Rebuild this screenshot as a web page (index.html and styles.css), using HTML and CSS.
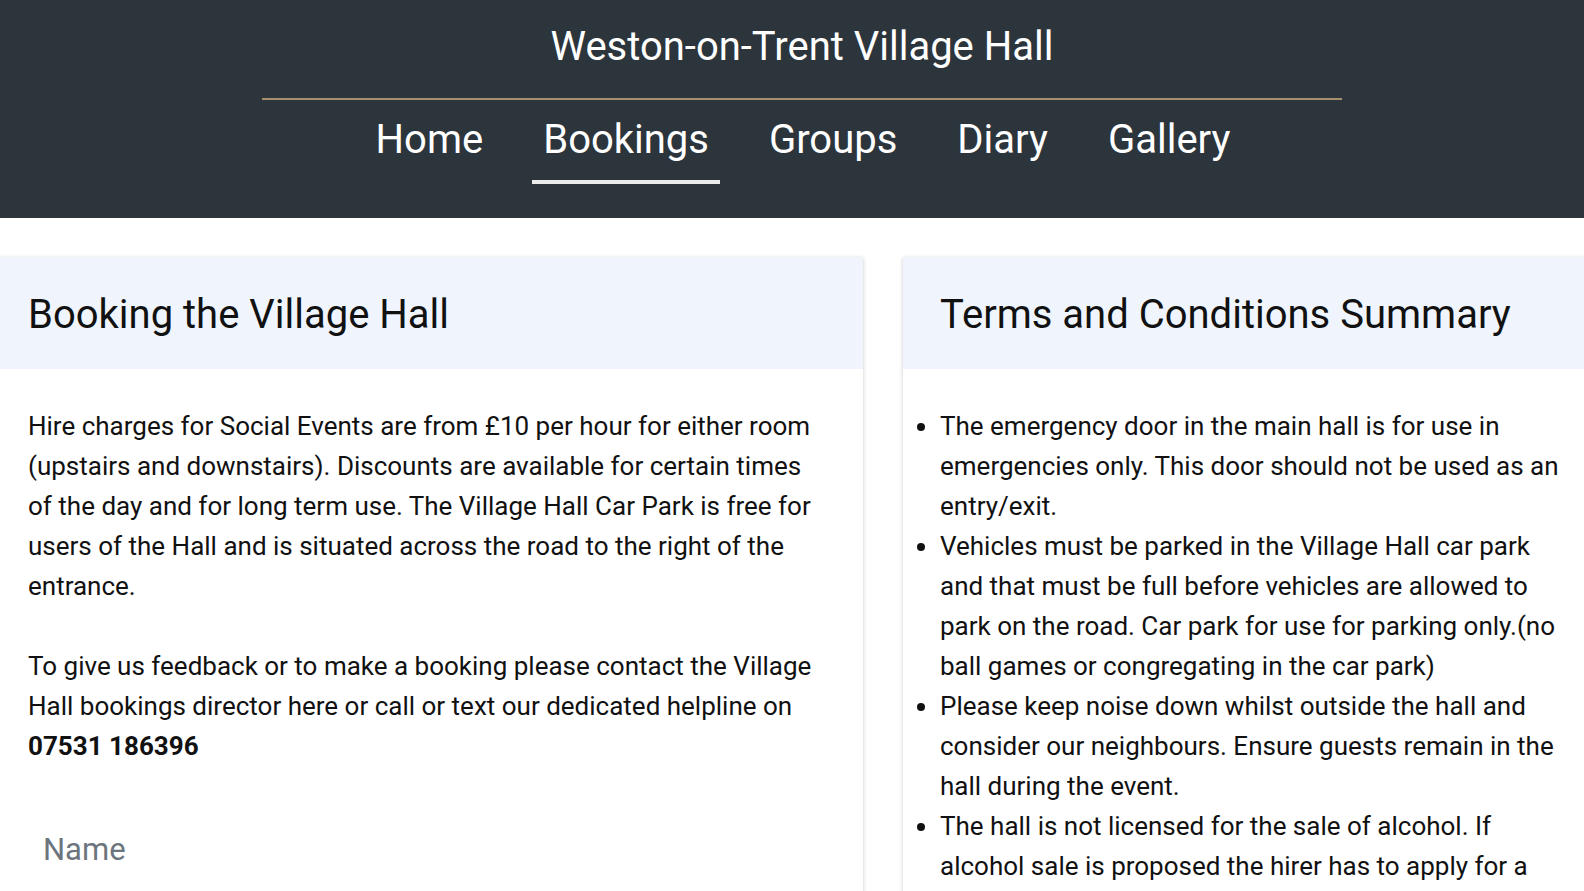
FILE: index.html
```html
<!DOCTYPE html>
<html lang="en">
<head>
<meta charset="utf-8">
<title>Bookings - Weston-on-Trent Village Hall</title>
<link rel="stylesheet" href="styles.css">
</head>
<body>
<header class="site-header">
  <h1 class="site-title">Weston-on-Trent Village Hall</h1>
  <hr class="header-rule">
  <nav class="main-nav">
    <a class="nav-link" href="#">Home</a>
    <a class="nav-link active" href="#">Bookings</a>
    <a class="nav-link" href="#">Groups</a>
    <a class="nav-link" href="#">Diary</a>
    <a class="nav-link" href="#">Gallery</a>
  </nav>
</header>
<main class="content">
  <section class="card card-booking">
    <div class="card-head"><h2 class="card-title">Booking the Village Hall</h2></div>
    <div class="card-body">
      <p class="para">Hire charges for Social Events are from £10 per hour for either room (upstairs and downstairs). Discounts are available for certain times of the day and for long term use. The Village Hall Car Park is free for users of the Hall and is situated across the road to the right of the entrance.</p>
      <p class="para">To give us feedback or to make a booking please contact the Village Hall bookings director here or call or text our dedicated helpline on <strong class="phone">07531 186396</strong></p>
      <form class="booking-form">
        <input class="field" type="text" placeholder="Name">
      </form>
    </div>
  </section>
  <section class="card card-terms">
    <div class="card-head"><h2 class="card-title">Terms and Conditions Summary</h2></div>
    <div class="card-body">
      <ul class="terms">
        <li>The emergency door in the main hall is for use in emergencies only. This door should not be used as an entry/exit.</li>
        <li>Vehicles must be parked in the Village Hall car park and that must be full before vehicles are allowed to park on the road. Car park for use for parking only.(no ball games or congregating in the car park)</li>
        <li>Please keep noise down whilst outside the hall and consider our neighbours. Ensure guests remain in the hall during the event.</li>
        <li>The hall is not licensed for the sale of alcohol. If alcohol sale is proposed the hirer has to apply for a Temporary Event Notice from the local council.</li>
      </ul>
    </div>
  </section>
</main>
</body>
</html>
```
FILE: styles.css
```css
html, body {
  margin: 0;
  padding: 0;
  overflow: hidden;
}
body {
  font-family: Roboto, "Liberation Sans", Arial, sans-serif;
  color: #111;
  background: #fff;
}
.site-header {
  background: #2c353c;
  padding: 23px 0 34px 20px;
  display: flex;
  flex-direction: column;
  align-items: center;
}
.site-title {
  margin: 0;
  font-size: 40px;
  line-height: 48px;
  font-weight: 400;
  color: #fff;
}
.header-rule {
  width: 1080px;
  margin: 27px 0 0;
  border: 0;
  height: 2px;
  background: #a68e6e;
}
.main-nav {
  display: flex;
  gap: 38px;
  margin-top: 16px;
  padding-left: 2px;
}
.nav-link {
  color: #fff;
  text-decoration: none;
  font-size: 40px;
  line-height: 48px;
  padding: 0 11px 16px;
  border-bottom: 4px solid transparent;
}
.nav-link.active {
  border-bottom-color: #ebebeb;
}
.content {
  display: grid;
  grid-template-columns: 872px 696px;
  gap: 40px;
  margin-left: -9px;
  padding-top: 39px;
}
.card {
  background: #fff;
  box-shadow: 0 1px 4px rgba(0, 0, 0, 0.22);
  min-height: 700px;
}
.card-head {
  background: #f0f5fd;
  padding: 34px 37px 30px;
}
.card-title {
  margin: 0;
  font-size: 40px;
  line-height: 48px;
  font-weight: 400;
  color: #111;
}
.card-body {
  padding: 37px;
  font-size: 26px;
  line-height: 40px;
}
.para {
  margin: 0 0 40px;
}
.phone {
  font-weight: 700;
}
.booking-form {
  margin: 0;
}
.field {
  display: block;
  width: 100%;
  box-sizing: border-box;
  border: 0;
  border-bottom: 1px solid #ced4da;
  padding: 26px 15px 30px;
  font-family: Roboto, "Liberation Sans", Arial, sans-serif;
  font-size: 31px;
  line-height: 36px;
  color: #212529;
  background: transparent;
  outline: none;
}
.field::placeholder {
  color: #6c757d;
}
.terms {
  margin: 0;
  padding: 0;
  list-style: disc outside;
}
```
